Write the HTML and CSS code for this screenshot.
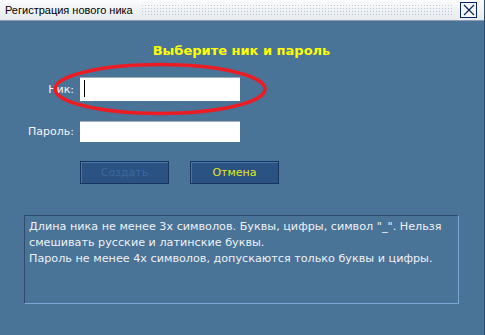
FILE: index.html
```html
<!DOCTYPE html>
<html lang="ru">
<head>
    <meta charset="UTF-8">
    <title>Регистрация нового ника</title>
    <link rel="stylesheet" href="styles.css">
</head>
<body>

<div class="window">
    <div class="titlebar">
        <span class="title">Регистрация нового ника</span>
        <span class="grip"></span>
        <span class="close">
            <svg width="14" height="12" viewBox="0 0 14 12"><path d="M2 1 L12 11 M12 1 L2 11" stroke="#0a246a" stroke-width="1.2" fill="none"/></svg>
        </span>
    </div>

    <div class="content">
        <h1>Выберите ник и пароль</h1>

        <div class="form">
            <div class="row nick">
                <label for="nick">Ник:</label>
                <span class="field-wrap">
                    <input id="nick" type="text" class="field tall">
                    <span class="caret"></span>
                </span>
                <!-- red marker drawn over the nick field -->
                <svg class="marker" width="216" height="54" viewBox="0 0 216 54">
                    <ellipse cx="108" cy="27" rx="105" ry="24.5" fill="none" stroke="#ec1c24" stroke-width="3.5"/>
                </svg>
            </div>
            <div class="row">
                <label for="pass">Пароль:</label>
                <input id="pass" type="password" class="field">
            </div>
        </div>

        <div class="buttons">
            <button class="btn" disabled>Создать</button>
            <button class="btn cancel">Отмена</button>
        </div>

        <div class="info">Длина ника не менее 3х символов. Буквы, цифры, символ "_". Нельзя смешивать русские и латинские буквы.<br>Пароль не менее 4х символов, допускаются только буквы и цифры.</div>
    </div>
</div>

</body>
</html>
```

FILE: styles.css
```css
html, body {
    margin: 0;
    padding: 0;
    background: #4a7398;
}
.window {
    width: 485px;
    height: 335px;
    display: flex;
    flex-direction: column;
    font-family: "DejaVu Sans", sans-serif;
    box-sizing: border-box;
    border-right: 1px solid #2c4d6e;
}
.titlebar {
    height: 21px;
    display: flex;
    align-items: center;
    background: linear-gradient(#fbfcfd, #e6eaee);
    border-bottom: 1px solid #8a9db2;
    box-sizing: border-box;
    padding: 0 7px 0 5px;
}
.title {
    font-family: "Liberation Sans", sans-serif;
    font-size: 11px;
    color: #000;
    white-space: nowrap;
}
.grip {
    flex: 1;
    height: 13px;
    margin: 0 6px 0 8px;
    background-image: radial-gradient(circle, #b8c6d6 0.7px, transparent 0.9px);
    background-size: 3px 3px;
}
.close {
    width: 15px;
    height: 14px;
    border: 1px solid #0a246a;
    background: #f4f6f8;
    display: flex;
    align-items: center;
    justify-content: center;
}
.content {
    flex: 1;
    padding: 0 25px 0 24px;
}
h1 {
    margin: 22px 0 0;
    text-align: center;
    font-size: 13px;
    font-weight: bold;
    color: #ffff00;
    line-height: 16px;
}
.form {
    margin-top: 18px;
    display: flex;
    flex-direction: column;
    gap: 20px;
}
.row {
    position: relative;
    display: flex;
    align-items: center;
}
.row label {
    width: 50px;
    text-align: right;
    margin-right: 6px;
    font-size: 11px;
    color: #f4f6f8;
}
.field-wrap {
    position: relative;
    display: flex;
}
.caret {
    position: absolute;
    left: 4px;
    top: 3px;
    width: 1px;
    height: 17px;
    background: #000;
}
.field {
    width: 160px;
    height: 21px;
    box-sizing: border-box;
    border: none;
    border-top: 1px solid #a0a8b0;
    background: #fff;
    padding: 0 4px;
    outline: none;
    font-size: 12px;
}
.field.tall {
    height: 24px;
}
.marker {
    position: absolute;
    left: 28px;
    top: -15px;
    pointer-events: none;
}
.buttons {
    display: flex;
    gap: 21px;
    margin: 19px 0 0 56px;
}
.btn {
    width: 89px;
    height: 23px;
    background: #2a5283;
    border: 1px solid #15345e;
    box-shadow: inset 1px 1px 0 #4a76a8;
    font-family: "DejaVu Sans", sans-serif;
    font-size: 11px;
    color: #e4e81c;
    padding: 0;
}
.btn:disabled {
    color: #3d6a9c;
}
.info {
    margin-top: 31px;
    height: 89px;
    box-sizing: border-box;
    border: 1px solid;
    border-color: #2e4d6c #7aa8d8 #7aa8d8 #2e4d6c;
    padding: 3px 4px;
    font-size: 11.2px;
    line-height: 16px;
    color: #eef2f6;
}
```
